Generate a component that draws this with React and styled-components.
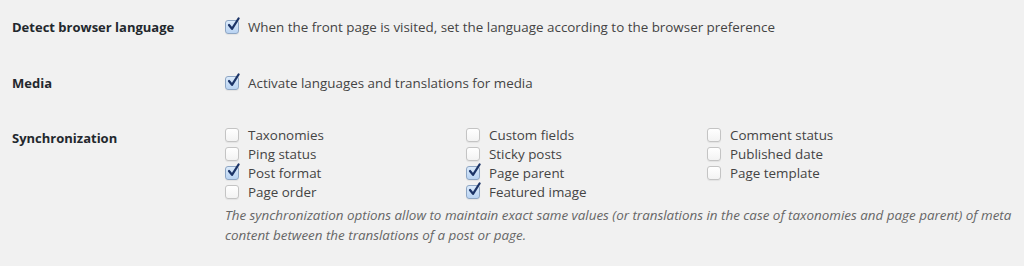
import React from "react";
import styled, { createGlobalStyle } from "styled-components";

const GlobalStyle = createGlobalStyle`
  html, body {
    margin: 0;
    padding: 0;
    background: #f1f1f1;
  }
  body {
    font-family: "Open Sans", "Liberation Sans", sans-serif;
    font-size: 13px;
    color: #444;
  }
`;

const syncOptions = [
  [
    { label: "Taxonomies", checked: false },
    { label: "Ping status", checked: false },
    { label: "Post format", checked: true },
    { label: "Page order", checked: false },
  ],
  [
    { label: "Custom fields", checked: false },
    { label: "Sticky posts", checked: false },
    { label: "Page parent", checked: true },
    { label: "Featured image", checked: true },
  ],
  [
    { label: "Comment status", checked: false },
    { label: "Published date", checked: false },
    { label: "Page template", checked: false },
  ],
];

const CheckBox = ({ checked }) => (
  <Box $checked={checked}>
    {checked && (
      <CheckMark viewBox="0 0 16 16">
        <path
          d="M3.2 8.6 L6.4 12.6 L13.4 1.6"
          fill="none"
          stroke="#1c3467"
          strokeWidth="2.4"
          strokeLinecap="round"
          strokeLinejoin="round"
        />
      </CheckMark>
    )}
  </Box>
);

const Option = ({ checked, children }) => (
  <OptionLabel>
    <CheckBox checked={checked} />
    <span>{children}</span>
  </OptionLabel>
);

const App = () => {
  return (
    <>
      <GlobalStyle />
      <Table>
        <Row $pad="18px 0 20px">
          <Label>Detect browser language</Label>
          <Field>
            <Option checked>
              When the front page is visited, set the language according to the browser preference
            </Option>
          </Field>
        </Row>

        <Row $pad="18px 0 19px">
          <Label>Media</Label>
          <Field>
            <Option checked>Activate languages and translations for media</Option>
          </Field>
        </Row>

        <Row $pad="15px 0 20px">
          <Label $offset="3px">Synchronization</Label>
          <Field>
            <Columns>
              {syncOptions.map((col, i) => (
                <Column key={i}>
                  {col.map((opt) => (
                    <Option key={opt.label} checked={opt.checked}>
                      {opt.label}
                    </Option>
                  ))}
                </Column>
              ))}
            </Columns>
            <Description>
              The synchronization options allow to maintain exact same values (or translations in the
              case of taxonomies and page parent) of meta content between the translations of a post or
              page.
            </Description>
          </Field>
        </Row>
      </Table>
    </>
  );
};

const Table = styled.div`
  display: flex;
  flex-direction: column;
  width: 1024px;
`;

const Row = styled.div`
  display: grid;
  grid-template-columns: 225px 1fr;
  padding: ${(p) => p.$pad};
`;

const Label = styled.div`
  padding-left: 12px;
  margin-top: ${(p) => p.$offset || "0"};
  font-weight: 700;
  color: #23282d;
  line-height: 18px;
`;

const Field = styled.div`
  display: flex;
  flex-direction: column;
`;

const OptionLabel = styled.label`
  display: flex;
  align-items: center;
  gap: 9px;
  height: 18px;
  line-height: 18px;
  font-size: 13.4px;
  color: #444;
  white-space: nowrap;
`;

const Columns = styled.div`
  display: grid;
  grid-template-columns: 241px 241px 241px;
  align-items: start;
`;

const Column = styled.div`
  display: flex;
  flex-direction: column;
  gap: 1px;
`;

const Box = styled.span`
  position: relative;
  flex: none;
  width: 12px;
  height: 12px;
  border: 1px solid ${(p) => (p.$checked ? "#8ea6c4" : "#c4c4c4")};
  border-radius: 3px;
  background: ${(p) =>
    p.$checked
      ? "linear-gradient(#dcebfb, #b9d3f2)"
      : "linear-gradient(#ffffff, #f3f3f3)"};
  box-shadow: 0 1px 1px rgba(0, 0, 0, 0.06);
`;

const CheckMark = styled.svg`
  position: absolute;
  left: 0px;
  top: -4px;
  width: 15px;
  height: 15px;
`;

const Description = styled.p`
  margin: 4px 0 0;
  font-style: italic;
  font-size: 13.4px;
  color: #666;
  line-height: 20px;
  padding-right: 4px;
`;

export default App;
